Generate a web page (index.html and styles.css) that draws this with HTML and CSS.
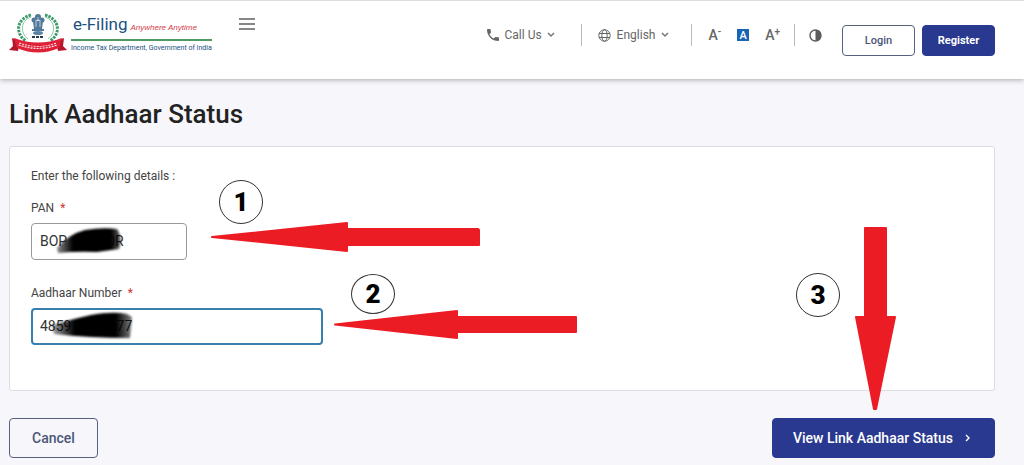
FILE: index.html
```html
<!DOCTYPE html>
<html lang="en">
<head>
<meta charset="utf-8">
<meta name="viewport" content="width=device-width, initial-scale=1">
<title>Link Aadhaar Status</title>
<link rel="stylesheet" href="styles.css">
</head>
<body>
<header class="header">
  <a class="brand" href="#">
    <svg class="emblem" width="58" height="42" viewBox="0 0 58 42" aria-hidden="true">
      <g fill="none" stroke="#3f9a6b" stroke-width="3" stroke-dasharray="2.5 1">
        <path d="M22 3C7 7 6 22 17 29"/><path d="M36 3C51 7 52 22 41 29"/>
      </g>
      <g fill="none" stroke="#86c4a0" stroke-width="1">
        <path d="M22 5C11 9 11 21 19 27"/><path d="M36 5C47 9 47 21 39 27"/>
      </g>
      <g fill="#52779a">
        <circle cx="29" cy="5" r="3"/><circle cx="25" cy="8" r="2.5"/><circle cx="33" cy="8" r="2.5"/>
        <path d="M24 9h10l-1 8h-8z"/><path d="M23 17h12v2H23z"/>
      </g>
      <path d="M27 8v7M31 8v7M29 5v4" stroke="#b9cddb" fill="none"/>
      <ellipse cx="29" cy="21" rx="5" ry="2" fill="#5d83a3"/>
      <path d="M23 25h3m1 0h3m1 0h3" stroke="#263c4b" stroke-width="2"/>
      <path d="M3 26l8 3-2 10-9-1 4-4zM55 26l-8 3 2 10 9-1-4-4z" fill="#b5162b"/>
      <path d="M5 26Q29 35 53 26L50 36Q29 45 8 36z" fill="#df2138"/>
      <path d="M10 32Q29 39 48 32" fill="none" stroke="#fff0f0" stroke-width="3" stroke-dasharray="2 1"/>
      <path d="M10 32Q29 39 48 32" fill="none" stroke="#df2138" stroke-width="1"/>
    </svg>
    <span class="brand-text">
      <span class="brand-top"><span class="brand-name">e-Filing</span><em class="brand-tag">Anywhere Anytime</em></span>
      <span class="brand-dept">Income Tax Department, Government of India</span>
    </span>
  </a>
  <button class="plain menu" type="button" aria-label="Menu"><svg width="16" height="12" viewBox="0 0 16 12"><path d="M0 1h16M0 6h16M0 11h16" stroke="#606060" stroke-width="1.6"/></svg></button>
  <nav class="tools" aria-label="Site tools">
    <button class="plain call" type="button">
      <svg width="12" height="12" viewBox="3 3 18 18" fill="#666"><path d="M6.62 10.79c1.44 2.83 3.76 5.14 6.59 6.59l2.2-2.2c.27-.27.67-.36 1.02-.24 1.12.37 2.33.57 3.57.57.55 0 1 .45 1 1V20c0 .55-.45 1-1 1C10.600 21 3 13.400 3 4c0-.55.45-1 1-1h3.500c.55 0 1 .45 1 1 0 1.250.2 2.450.57 3.570.11.35.03.74-.25 1.020z"/></svg>
      <span>Call Us</span>
      <svg width="8" height="6" viewBox="0 0 8 6"><path d="M1 1l3 3 3-3" fill="none" stroke="#777" stroke-width="1.5"/></svg>
    </button>
    <button class="plain language" type="button">
      <svg width="13" height="13" viewBox="0 0 13 13" fill="none" stroke="#666"><circle cx="6.500" cy="6.500" r="5.700"/><ellipse cx="6.500" cy="6.500" rx="2.700" ry="5.700"/><path d="M1 4.500h11M1 8.500h11"/></svg>
      <span>English</span>
      <svg width="8" height="6" viewBox="0 0 8 6"><path d="M1 1l3 3 3-3" fill="none" stroke="#777" stroke-width="1.500"/></svg>
    </button>
    <span class="sizes">
      <button class="plain size" type="button" aria-label="Decrease text size">A<sup>-</sup></button>
      <button class="plain size-normal" type="button" aria-label="Normal text size">A</button>
      <button class="plain size" type="button" aria-label="Increase text size">A<sup>+</sup></button>
    </span>
    <button class="plain contrast" type="button" aria-label="Contrast"><svg width="13" height="13" viewBox="0 0 13 13"><circle cx="6.500" cy="6.500" r="5.500" fill="none" stroke="#5c5c5c" stroke-width="1.400"/><path d="M6.500 1a5.500 5.500 0 0 1 0 11z" fill="#5c5c5c"/></svg></button>
  </nav>
  <div class="account">
    <button class="btn btn-small" type="button">Login</button>
    <button class="btn btn-small btn-primary" type="button">Register</button>
  </div>
</header>

<main class="page">
  <h1 class="title">Link Aadhaar Status</h1>
  <form class="form">
    <section class="card">
      <p class="intro">Enter the following details :</p>
      <div class="field pan-field">
        <label class="label" for="pan">PAN <span class="required">*</span></label>
        <div class="control">
          <input class="input" id="pan" type="text" value="BOP&#160;&#160;&#160;&#160;&#160;&#160;&#160;&#160;&#160;&#160;&#160;OR">
          <svg class="scribble" width="70" height="32" viewBox="0 0 70 32" aria-hidden="true">
            <defs><linearGradient id="ink-pan"><stop offset="0" stop-opacity=".45"/><stop offset=".25" stop-opacity="1"/><stop offset=".85" stop-opacity="1"/><stop offset="1" stop-opacity=".6"/></linearGradient></defs>
            <path fill="url(#ink-pan)" d="M2 24Q14 10 30 6Q48 3 62 5Q68 14 64 25L42 28Q22 27 3 29z"/>
          </svg>
        </div>
      </div>
      <div class="field aadhaar-field">
        <label class="label" for="aadhaar">Aadhaar Number <span class="required">*</span></label>
        <div class="control">
          <input class="input input-active" id="aadhaar" type="text" value="4859&#160;&#160;&#160;&#160;&#160;&#160;&#160;&#160;&#160;&#160;&#160;&#160;&#160;77">
          <svg class="scribble scribble-wide" width="86" height="32" viewBox="0 0 86 32" aria-hidden="true">
            <defs><linearGradient id="ink-aadhaar"><stop offset="0" stop-opacity=".35"/><stop offset=".28" stop-opacity="1"/><stop offset=".8" stop-opacity="1"/><stop offset="1" stop-opacity=".5"/></linearGradient></defs>
            <path fill="url(#ink-aadhaar)" d="M3 16Q24 10 42 6Q64 2 78 5L83 8L81 29Q40 29 5 25z"/>
          </svg>
        </div>
      </div>
      <svg class="arrow arrow-pan" width="270" height="32" viewBox="0 0 270 32" aria-hidden="true"><path d="M1 16L136 2V8H267L268 9V24H136V30z"/></svg>
      <span class="step step-one">1</span>
      <svg class="arrow arrow-aadhaar" width="244" height="31" viewBox="0 0 244 31" aria-hidden="true"><path d="M1 15.500L123 2V8H242V23H123V29z"/></svg>
      <span class="step step-two">2</span>
      <svg class="arrow arrow-submit" width="43" height="185" viewBox="0 0 43 185" aria-hidden="true"><path d="M11 2H32V91H41L22 183H20L2 91H11z"/></svg>
      <span class="step step-three">3</span>
    </section>
    <div class="actions">
      <button class="btn btn-cancel" type="button">Cancel</button>
      <button class="btn btn-primary btn-submit" type="submit">View Link Aadhaar Status <svg width="5" height="8" viewBox="0 0 5 8" aria-hidden="true"><path d="M1 1l3 3-3 3" fill="none" stroke="#fff" stroke-width="1.400"/></svg></button>
    </div>
  </form>
</main>
</body>
</html>
```
FILE: styles.css
```css
* { box-sizing: border-box; }
body { margin: 0; background: #f6f6fb; color: #444; font-family: Roboto, "Liberation Sans", sans-serif; font-size: 12px; }
button, input { font: inherit; }
button { cursor: pointer; }
svg { display: block; flex: none; }

.header { display: flex; align-items: flex-start; min-height: 79px; padding: 9px 29px 0 9px; background: #fff; border-top: 1px solid #ddd; box-shadow: 0 1px 5px #aaa; }
.brand { display: flex; gap: 4px; margin-top: 2px; color: #20517f; text-decoration: none; white-space: nowrap; }
.brand-text { display: flex; flex-direction: column; padding-top: 1px; }
.brand-top { display: flex; align-items: baseline; gap: 3px; padding: 0 2px; line-height: 22px; border-bottom: 2px solid #4f9963; }
.brand-name { font-size: 17px; }
.brand-tag { color: #d33a48; font-family: "Liberation Sans", sans-serif; font-size: 8px; }
.brand-dept { font-size: 7px; line-height: 14px; }
.plain { display: flex; align-items: center; padding: 0; border: 0; background: transparent; color: #666; white-space: nowrap; }
.menu { margin: 8px 0 0 27px; }
.tools { display: flex; align-items: center; height: 22px; margin: 14px 20px 0 auto; font-size: 12px; }
.call { gap: 5px; padding-right: 26px; }
.language { gap: 6px; height: 22px; padding: 0 22px 0 16px; border-left: 1px solid #bbb; }
.sizes { display: flex; align-items: center; gap: 16px; height: 22px; padding: 0 14px 0 16px; border: solid #bbb; border-width: 0 1px; }
.size { font-size: 14px; font-weight: 500; line-height: 14px; }
.size sup { align-self: flex-start; font-size: 10px; line-height: 8px; }
.size-normal { justify-content: center; width: 12px; height: 12px; background: #1765b3; color: #fff; font-size: 11px; font-weight: 500; }
.contrast { padding-left: 14px; }
.account { display: flex; gap: 7px; margin-top: 15px; }

.btn { display: flex; align-items: center; justify-content: center; border: 1px solid #56617f; border-radius: 4px; background: transparent; color: #4c5678; font-weight: 500; white-space: nowrap; }
.btn-small { width: 73px; height: 31px; font-size: 11px; }
.btn-primary { border-color: #293990; background: #293990; color: #fff; }
.btn-small.btn-primary { font-weight: 700; }

.page { padding: 18px 29px 7px 9px; }
.title { margin: 0 0 15px; color: #222; font-size: 26px; font-weight: 500; line-height: 34px; }
.card { position: relative; padding: 20px 21px 45px; border: 1px solid #dddde3; border-radius: 3px; background: #fff; }
.intro { margin: 0 0 15px; line-height: 18px; }
.field { display: flex; flex-direction: column; gap: 7px; }
.pan-field { width: 156px; }
.aadhaar-field { width: 292px; max-width: 100%; margin-top: 25px; }
.label { line-height: 16px; }
.required { margin-left: 3px; color: #c33; }
.control { position: relative; }
.input { display: block; width: 100%; height: 37px; padding: 0 8px 2px; border: 1px solid #999; border-radius: 4px; background: #fff; color: #333; font-size: 14px; outline: 0; }
.input-active { padding: 0 7px 2px; border: 2px solid #397fae; }
.scribble { position: absolute; left: 24px; top: 1px; fill: #050505; filter: blur(1px); pointer-events: none; }
.scribble-wide { left: 18px; }
.arrow { position: absolute; fill: #ec1c24; stroke: #ec1c24; stroke-width: 2; stroke-linejoin: round; pointer-events: none; }
.arrow-pan { left: 201px; top: 74px; }
.arrow-aadhaar { left: 324px; top: 162px; }
.arrow-submit { right: 97px; top: 79px; }
.step { position: absolute; display: flex; align-items: center; justify-content: center; width: 44px; height: 44px; border: 1px solid #333; border-radius: 50%; background: #fff; color: #000; font-size: 26px; font-weight: 900; line-height: 26px; }
.step-one { left: 209px; top: 33px; }
.step-two { left: 341px; top: 127px; height: 40px; }
.step-three { right: 154px; top: 126px; }

.actions { display: flex; justify-content: space-between; padding-top: 27px; }
.btn-cancel, .btn-submit { height: 40px; font-size: 14px; }
.btn-cancel { width: 89px; }
.btn-submit { gap: 12px; padding: 0 24px 0 20px; }
```
